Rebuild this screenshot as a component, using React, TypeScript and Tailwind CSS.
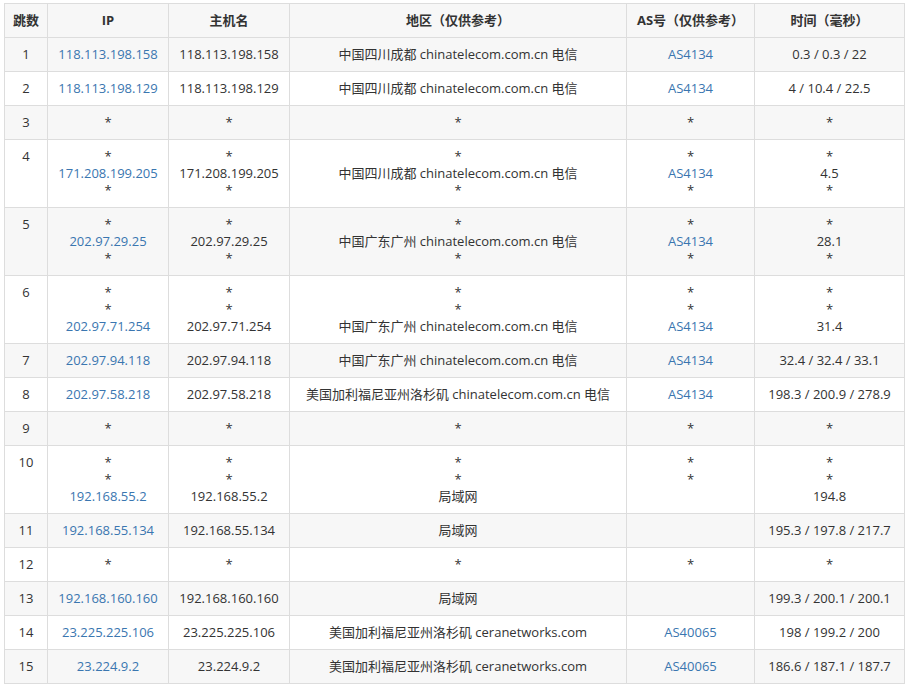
type Row = { n: number; ip: string[]; host: string[]; area: string[]; as: string[]; t: string[] };

const S = "*";
const rows: Row[] = [
  { n: 1, ip: ["118.113.198.158"], host: ["118.113.198.158"], area: ["中国四川成都 chinatelecom.com.cn 电信"], as: ["AS4134"], t: ["0.3 / 0.3 / 22"] },
  { n: 2, ip: ["118.113.198.129"], host: ["118.113.198.129"], area: ["中国四川成都 chinatelecom.com.cn 电信"], as: ["AS4134"], t: ["4 / 10.4 / 22.5"] },
  { n: 3, ip: [S], host: [S], area: [S], as: [S], t: [S] },
  { n: 4, ip: [S, "171.208.199.205", S], host: [S, "171.208.199.205", S], area: [S, "中国四川成都 chinatelecom.com.cn 电信", S], as: [S, "AS4134", S], t: [S, "4.5", S] },
  { n: 5, ip: [S, "202.97.29.25", S], host: [S, "202.97.29.25", S], area: [S, "中国广东广州 chinatelecom.com.cn 电信", S], as: [S, "AS4134", S], t: [S, "28.1", S] },
  { n: 6, ip: [S, S, "202.97.71.254"], host: [S, S, "202.97.71.254"], area: [S, S, "中国广东广州 chinatelecom.com.cn 电信"], as: [S, S, "AS4134"], t: [S, S, "31.4"] },
  { n: 7, ip: ["202.97.94.118"], host: ["202.97.94.118"], area: ["中国广东广州 chinatelecom.com.cn 电信"], as: ["AS4134"], t: ["32.4 / 32.4 / 33.1"] },
  { n: 8, ip: ["202.97.58.218"], host: ["202.97.58.218"], area: ["美国加利福尼亚州洛杉矶 chinatelecom.com.cn 电信"], as: ["AS4134"], t: ["198.3 / 200.9 / 278.9"] },
  { n: 9, ip: [S], host: [S], area: [S], as: [S], t: [S] },
  { n: 10, ip: [S, S, "192.168.55.2"], host: [S, S, "192.168.55.2"], area: [S, S, "局域网"], as: [S, S], t: [S, S, "194.8"] },
  { n: 11, ip: ["192.168.55.134"], host: ["192.168.55.134"], area: ["局域网"], as: [], t: ["195.3 / 197.8 / 217.7"] },
  { n: 12, ip: [S], host: [S], area: [S], as: [S], t: [S] },
  { n: 13, ip: ["192.168.160.160"], host: ["192.168.160.160"], area: ["局域网"], as: [], t: ["199.3 / 200.1 / 200.1"] },
  { n: 14, ip: ["23.225.225.106"], host: ["23.225.225.106"], area: ["美国加利福尼亚州洛杉矶 ceranetworks.com"], as: ["AS40065"], t: ["198 / 199.2 / 200"] },
  { n: 15, ip: ["23.224.9.2"], host: ["23.224.9.2"], area: ["美国加利福尼亚州洛杉矶 ceranetworks.com"], as: ["AS40065"], t: ["186.6 / 187.1 / 187.7"] },
];

function Lines({ items, link }: { items: string[]; link?: boolean }) {
  return (
    <>
      {items.map((s, i) => (
        <div key={i} className={link && s !== S ? "text-[#3a76b0]" : ""}>
          {s}
        </div>
      ))}
    </>
  );
}

const td = "border border-[#dddddd] px-2 py-2 text-center align-top";

export default function App() {
  return (
    <div
      className="bg-white pl-[4px] pt-[3px] text-[13px] leading-[17px] text-[#333333]"
      style={{ fontFamily: '"Open Sans", "Noto Sans CJK SC", sans-serif' }}
    >
      <table className="w-[900px] table-fixed border-collapse">
        <colgroup>
          <col className="w-[43px]" />
          <col className="w-[121px]" />
          <col className="w-[121px]" />
          <col className="w-[337px]" />
          <col className="w-[128px]" />
          <col className="w-[150px]" />
        </colgroup>
        <thead>
          <tr className="bg-[#f7f7f7] font-bold">
            {["跳数", "IP", "主机名", "地区（仅供参考）", "AS号（仅供参考）", "时间（毫秒）"].map((h) => (
              <th key={h} className="border border-[#dddddd] px-1 py-2 text-center">
                {h}
              </th>
            ))}
          </tr>
        </thead>
        <tbody>
          {rows.map((r) => (
            <tr key={r.n} className={r.n % 2 === 1 ? "bg-[#f7f7f7]" : "bg-white"}>
              <td className={td}>{r.n}</td>
              <td className={td}><Lines items={r.ip} link /></td>
              <td className={td}><Lines items={r.host} /></td>
              <td className={td}><Lines items={r.area} /></td>
              <td className={td}><Lines items={r.as} link /></td>
              <td className={td}><Lines items={r.t} /></td>
            </tr>
          ))}
        </tbody>
      </table>
    </div>
  );
}
